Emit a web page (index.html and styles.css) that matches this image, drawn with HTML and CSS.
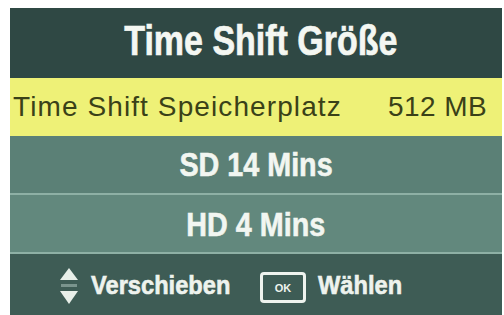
FILE: index.html
```html
<!DOCTYPE html>
<html>
<head>
<meta charset="utf-8">
<link rel="stylesheet" href="styles.css">
</head>
<body>
<div class="panel">
  <div class="header"><span class="title">Time Shift Größe</span></div>
  <div class="row selected">
    <span class="label">Time Shift Speicherplatz</span>
    <span class="value">512 MB</span>
  </div>
  <div class="row option sd"><span class="opt">SD 14 Mins</span></div>
  <div class="row option hd"><span class="opt">HD 4 Mins</span></div>
  <div class="footer">
    <svg class="arrows" width="18" height="38" viewBox="0 0 18 38">
      <path d="M9 1 L18 13 L0 13 Z" fill="#e8efe9"/>
      <rect x="1" y="17" width="16" height="3" fill="#7a948d"/>
      <path d="M0 24 L18 24 L9 37 Z" fill="#e8efe9"/>
    </svg>
    <span class="hint verschieben">Verschieben</span>
    <span class="okbox"><span class="ok">OK</span></span>
    <span class="hint waehlen">Wählen</span>
  </div>
</div>
</body>
</html>
```
FILE: styles.css
```css
html, body {
  margin: 0;
  padding: 0;
  background: #ffffff;
}
body {
  padding: 8px 2px 0 10px;
  font-family: "Liberation Sans", Arial, sans-serif;
}
.panel {
  width: 492px;
  height: 307px;
  display: flex;
  flex-direction: column;
  background: #3f5d56;
}
.header {
  height: 70px;
  box-sizing: border-box;
  padding-bottom: 6px;
  padding-left: 10px;
  background: #2f4844;
  display: flex;
  align-items: center;
  justify-content: center;
}
.title {
  color: #f4f7f2;
  font-weight: bold;
  font-size: 43px;
  transform: scaleX(0.79);
  display: inline-block;
  white-space: nowrap;
  -webkit-text-stroke: 0.7px #f4f7f2;
}
.row {
  display: flex;
  align-items: center;
  box-sizing: border-box;
}
.selected {
  height: 58px;
  background: #eef177;
  justify-content: space-between;
  padding: 0 15px 0 3px;
  color: #3a4118;
  font-size: 28px;
  letter-spacing: 1.1px;
}
.value {
  letter-spacing: 0.4px;
}
.option {
  justify-content: center;
}
.sd {
  height: 57px;
  background: #5b8076;
}
.hd {
  height: 59px;
  border-top: 2px solid #8eb0a5;
  background: #62887d;
  padding-top: 3px;
}
.opt {
  color: #f2f6f1;
  font-weight: bold;
  font-size: 33px;
  transform: scaleX(0.87);
  display: inline-block;
  white-space: nowrap;
  -webkit-text-stroke: 0.6px #f2f6f1;
}
.footer {
  flex: 1;
  box-sizing: border-box;
  border-top: 2px solid #8eb0a5;
  background: #3e5c55;
  display: flex;
  align-items: center;
  padding-left: 50px;
  padding-top: 2px;
}
.arrows {
  margin-right: 13px;
}
.hint {
  color: #eef3ee;
  font-weight: bold;
  font-size: 26px;
  transform: scaleX(0.91);
  transform-origin: left center;
  display: inline-block;
  white-space: nowrap;
  -webkit-text-stroke: 0.6px #eef3ee;
}
.verschieben {
  width: 140px;
}
.okbox {
  box-sizing: border-box;
  margin: 4px 12px 0 29px;
  width: 46px;
  height: 31px;
  border: 3px solid #eef3ee;
  border-radius: 4px;
  display: flex;
  align-items: center;
  justify-content: center;
}
.ok {
  color: #eef3ee;
  font-weight: bold;
  font-size: 11px;
}
```
